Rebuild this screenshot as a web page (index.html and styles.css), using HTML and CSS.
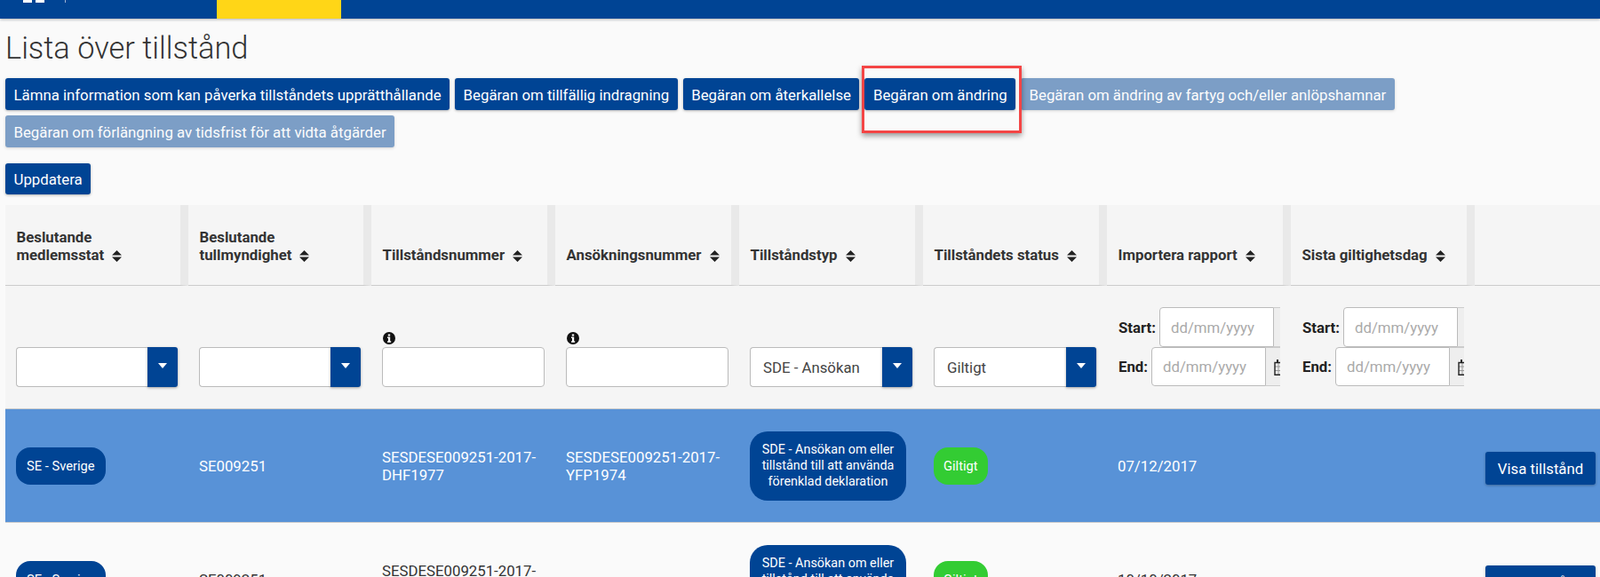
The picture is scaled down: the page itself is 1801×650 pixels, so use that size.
FILE: index.html
```html
<!DOCTYPE html>
<html lang="sv">
<head>
<meta charset="utf-8">
<title>Lista över tillstånd</title>
<link rel="stylesheet" href="styles.css">
</head>
<body>
<header class="topbar">
  <div class="logo"><span class="logo-block"></span><span class="logo-block"></span></div>
  <span class="logo-rule"></span>
  <span class="nav-active"></span>
</header>
<main class="page">
  <h1 class="title">Lista över tillstånd</h1>
  <div class="actions">
    <button class="btn">Lämna information som kan påverka tillståndets upprätthållande</button>
    <button class="btn">Begäran om tillfällig indragning</button>
    <button class="btn">Begäran om återkallelse</button>
    <button class="btn">Begäran om ändring</button>
    <button class="btn btn-disabled">Begäran om ändring av fartyg och/eller anlöpshamnar</button>
    <button class="btn btn-disabled">Begäran om förlängning av tidsfrist för att vidta åtgärder</button>
  </div>
  <div class="refresh"><button class="btn">Uppdatera</button></div>
  <table class="grid">
    <colgroup>
      <col class="c-206"><col class="c-206"><col class="c-207"><col class="c-207"><col class="c-207"><col class="c-207"><col class="c-207"><col class="c-207"><col class="c-last">
    </colgroup>
    <thead>
      <tr class="head-row">
        <th>Beslutande<br>medlemsstat<svg class="sort" viewBox="0 0 11 13"><path d="M5.5 0 11 5.5H0zM0 7.5h11L5.5 13z"/></svg></th>
        <th>Beslutande<br>tullmyndighet<svg class="sort" viewBox="0 0 11 13"><path d="M5.5 0 11 5.5H0zM0 7.5h11L5.5 13z"/></svg></th>
        <th>Tillståndsnummer<svg class="sort" viewBox="0 0 11 13"><path d="M5.5 0 11 5.5H0zM0 7.5h11L5.5 13z"/></svg></th>
        <th>Ansökningsnummer<svg class="sort" viewBox="0 0 11 13"><path d="M5.5 0 11 5.5H0zM0 7.5h11L5.5 13z"/></svg></th>
        <th>Tillståndstyp<svg class="sort" viewBox="0 0 11 13"><path d="M5.5 0 11 5.5H0zM0 7.5h11L5.5 13z"/></svg></th>
        <th>Tillståndets status<svg class="sort" viewBox="0 0 11 13"><path d="M5.5 0 11 5.5H0zM0 7.5h11L5.5 13z"/></svg></th>
        <th>Importera rapport<svg class="sort" viewBox="0 0 11 13"><path d="M5.5 0 11 5.5H0zM0 7.5h11L5.5 13z"/></svg></th>
        <th>Sista giltighetsdag<svg class="sort" viewBox="0 0 11 13"><path d="M5.5 0 11 5.5H0zM0 7.5h11L5.5 13z"/></svg></th>
        <th class="th-end"></th>
      </tr>
      <tr class="filter-row">
        <td><div class="select select-narrow"><input class="field" type="text"><span class="select-btn"></span></div></td>
        <td><div class="select select-narrow"><input class="field" type="text"><span class="select-btn"></span></div></td>
        <td>
          <svg class="info" viewBox="0 0 14 14"><circle cx="7" cy="7" r="7"/><path fill="#fff" d="M5.8 2.4h2.4v2H5.8zM5 5.6h3.2v4.6h1v1.5H5v-1.5h1V7.1H5z"/></svg>
          <input class="field field-full" type="text">
        </td>
        <td>
          <svg class="info" viewBox="0 0 14 14"><circle cx="7" cy="7" r="7"/><path fill="#fff" d="M5.8 2.4h2.4v2H5.8zM5 5.6h3.2v4.6h1v1.5H5v-1.5h1V7.1H5z"/></svg>
          <input class="field field-full" type="text">
        </td>
        <td><div class="select"><input class="field" type="text" value="SDE - Ansökan"><span class="select-btn"></span></div></td>
        <td><div class="select"><input class="field" type="text" value="Giltigt"><span class="select-btn"></span></div></td>
        <td class="date-cell">
          <div class="dates">
            <div class="date-row date-start"><label class="date-label">Start:</label><input class="date-input" type="text" placeholder="dd/mm/yyyy"><span class="date-addon"></span></div>
            <div class="date-row date-end"><label class="date-label">End:</label><input class="date-input" type="text" placeholder="dd/mm/yyyy"><span class="date-addon"><svg class="cal" viewBox="0 0 14 19"><path fill="none" stroke="#999" stroke-width="1" d="M1 9h12M1 13.5h12M5 4.5v13.7M9 4.5v13.7"/><path fill="none" stroke="#222" stroke-width="1.4" d="M1 4.5h12v13.7H1z"/><path fill="#222" d="M3 1h2v4H3zM9 1h2v4H9z"/></svg></span></div>
          </div>
        </td>
        <td class="date-cell">
          <div class="dates">
            <div class="date-row date-start"><label class="date-label">Start:</label><input class="date-input" type="text" placeholder="dd/mm/yyyy"><span class="date-addon"></span></div>
            <div class="date-row date-end"><label class="date-label">End:</label><input class="date-input" type="text" placeholder="dd/mm/yyyy"><span class="date-addon"><svg class="cal" viewBox="0 0 14 19"><path fill="none" stroke="#999" stroke-width="1" d="M1 9h12M1 13.5h12M5 4.5v13.7M9 4.5v13.7"/><path fill="none" stroke="#222" stroke-width="1.4" d="M1 4.5h12v13.7H1z"/><path fill="#222" d="M3 1h2v4H3zM9 1h2v4H9z"/></svg></span></div>
          </div>
        </td>
        <td></td>
      </tr>
    </thead>
    <tbody>
      <tr class="row row-selected">
        <td><span class="pill">SE - Sverige</span></td>
        <td>SE009251</td>
        <td>SESDESE009251-2017-DHF1977</td>
        <td>SESDESE009251-2017-YFP1974</td>
        <td><span class="pill pill-type">SDE - Ansökan om eller tillstånd till att använda förenklad deklaration</span></td>
        <td><span class="pill pill-ok">Giltigt</span></td>
        <td>07/12/2017</td>
        <td></td>
        <td><button class="btn btn-view">Visa tillstånd</button></td>
      </tr>
      <tr class="row">
        <td><span class="pill">SE - Sverige</span></td>
        <td>SE009251</td>
        <td>SESDESE009251-2017-<br>&nbsp;</td>
        <td></td>
        <td><span class="pill pill-type">SDE - Ansökan om eller tillstånd till att använda förenklad deklaration</span></td>
        <td><span class="pill pill-ok">Giltigt</span></td>
        <td>10/10/2017</td>
        <td></td>
        <td><button class="btn btn-view">Visa tillstånd</button></td>
      </tr>
    </tbody>
  </table>
</main>
<div class="highlight"></div>
</body>
</html>
```

FILE: styles.css
```css
* { box-sizing: border-box; }
html, body { margin: 0; height: 650px; overflow: hidden; }
body {
  background: #fafafa;
  color: #333;
  font-family: Roboto, "Liberation Sans", sans-serif;
  font-size: 16.8px;
  line-height: 20px;
}
.topbar {
  height: 21px;
  background: #004494;
  box-shadow: 0 1px 3px rgba(0, 0, 0, .3);
  display: flex;
  align-items: flex-start;
  padding-left: 26px;
}
.logo { display: flex; gap: 4px; width: 47px; }
.logo-block { width: 10px; height: 3px; background: #fff; }
.logo-rule { width: 1px; height: 3px; background: #9db4d4; }
.nav-active { width: 140px; height: 21px; background: #ffd617; margin-left: 170px; }

.page { padding-left: 6px; }
.title {
  margin: 0;
  padding-top: 13px;
  height: 67px;
  font-size: 34.4px;
  line-height: 40px;
  font-weight: 300;
  color: #333;
}
.actions { display: flex; flex-wrap: wrap; gap: 6px; }
.refresh { margin-top: 18px; margin-bottom: 12px; }
.btn {
  height: 36px;
  padding: 1px 9.5px 0;
  border: 0;
  border-radius: 3px;
  background: #004494;
  color: #fff;
  font: 400 16.8px/20px Roboto, "Liberation Sans", sans-serif;
  box-shadow: 0 1px 3px rgba(0, 0, 0, .3);
  white-space: nowrap;
}
.btn-disabled { opacity: .5; }
.refresh .btn { height: 35px; }

.grid {
  width: 1795px;
  table-layout: fixed;
  border-collapse: separate;
  border-spacing: 0;
}
.c-206 { width: 206px; }
.c-207 { width: 207px; }
.c-last { width: 141px; }
.head-row th {
  height: 91px;
  padding: 0 0 24px 12.5px;
  vertical-align: bottom;
  text-align: left;
  font-weight: 700;
  font-size: 16.8px;
  background: #f5f5f5;
  border-right: 9px solid #e9e9e9;
  border-bottom: 1px solid #ccc;
  color: #333;
}
.head-row .th-end { border-right: 0; }
.sort { width: 11px; height: 13px; margin-left: 9px; vertical-align: -2px; fill: #222; }

.filter-row td {
  height: 138px;
  padding: 0 12px 24px 12px;
  vertical-align: bottom;
  background: #f5f5f5;
}
.filter-row .date-cell { padding-left: 13px; }
.select { display: flex; height: 45px; width: 183px; }
.select-narrow { width: 182px; }
.field {
  display: block;
  height: 45px;
  min-width: 0;
  flex: 1;
  padding: 0 14px;
  border: 1px solid #bbb;
  border-radius: 4px;
  background: #fff;
  color: #444;
  font: 400 16.8px Roboto, "Liberation Sans", sans-serif;
}
.field-full { width: 183px; }
.select .field { border-radius: 4px 0 0 4px; border-right: 0; }
.select-btn {
  position: relative;
  flex: 0 0 34px;
  background: #004494;
  border-radius: 0 3px 3px 0;
  box-shadow: 0 1px 3px rgba(0, 0, 0, .35);
  display: flex;
  align-items: center;
  justify-content: center;
}
.select-btn::after {
  content: "";
  border-left: 5.5px solid transparent;
  border-right: 5.5px solid transparent;
  border-top: 6px solid #fff;
  margin-top: -3px;
}
.info { display: block; width: 14px; height: 14px; margin: 0 0 3px 1px; fill: #111; }

.dates { width: 182px; overflow: hidden; margin-bottom: 1px; }
.date-row { display: flex; align-items: center; }
.date-start { height: 45px; }
.date-end { height: 44px; }
.date-label { flex: none; font-weight: 700; margin-right: 5px; color: #222; }
.date-start .date-label { width: 41px; }
.date-end .date-label { width: 32px; }
.date-input {
  flex: none;
  width: 129px;
  height: 100%;
  padding: 0 12px;
  border: 1px solid #bbb;
  border-radius: 4px 0 0 4px;
  background: #fff;
  font: 400 16.8px Roboto, "Liberation Sans", sans-serif;
}
.date-input::placeholder { color: #aaa; opacity: 1; }
.date-addon {
  flex: none;
  display: flex;
  align-items: center;
  width: 40px;
  height: 100%;
  padding-left: 9px;
  background: #eee;
  border: 1px solid #ccc;
  border-left: 0;
}
.cal { flex: none; width: 14px; height: 19px; }

.row td {
  height: 128px;
  padding: 0 12px;
  border-top: 1px solid #ccc;
  vertical-align: middle;
  color: #333;
}
.row-selected td { background: #5892d7; color: #fff; }
.pill {
  display: inline-block;
  padding: 12px;
  border-radius: 16px;
  background: #004494;
  color: #fff;
  font-size: 14.7px;
  line-height: 18px;
  vertical-align: middle;
}
.pill-type { width: 176px; padding: 12px 8px; border-radius: 20px; text-align: center; font-size: 14.4px; }
.pill-ok { background: #33cc33; padding: 12px 11px; }
.btn-view { height: 37px; width: 124px; padding: 1px 0 0; margin-top: 6px; }

.highlight {
  position: absolute;
  left: 970px;
  top: 74px;
  width: 180px;
  height: 76px;
  border: 3px solid #f44545;
  box-shadow: 0 3px 6px rgba(0, 0, 0, .4);
}
```
